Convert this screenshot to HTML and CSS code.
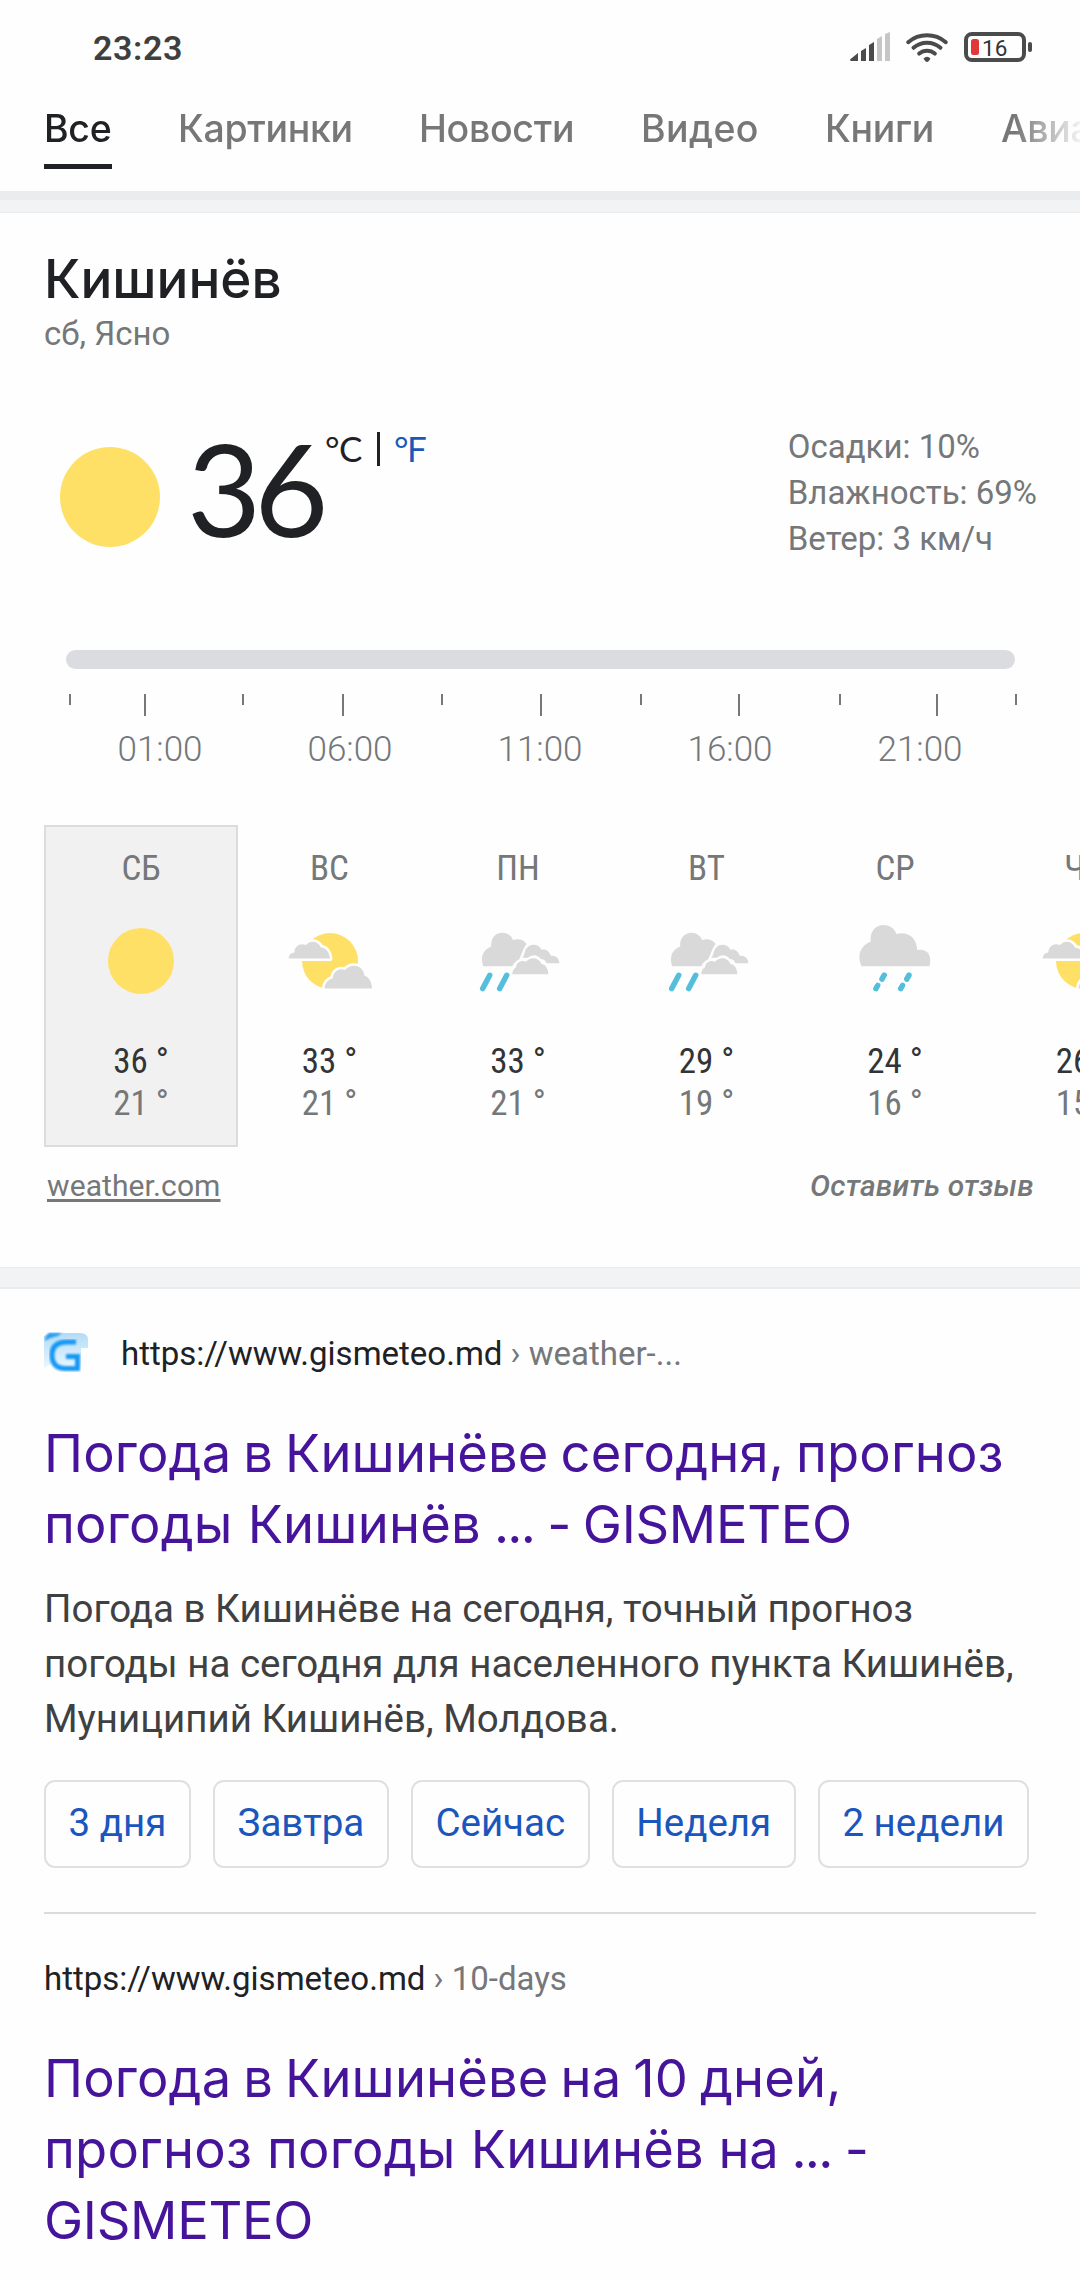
FILE: index.html
```
<!DOCTYPE html>
<html lang="ru">
<head>
<meta charset="utf-8">
<title>Погода в Кишинёве</title>
<link rel="stylesheet" href="styles.css">
</head>
<body>
<svg class="defs" width="0" height="0">
  <symbol id="i-sun" viewBox="0 0 96 96"><circle cx="48" cy="48" r="33" fill="#ffe067"/></symbol>
  <symbol id="i-partly" viewBox="0 0 96 96">
    <circle cx="48" cy="48" r="28" fill="#ffe067"/>
    <g fill="#d9d9d9" stroke="#fff" stroke-width="5" stroke-linejoin="round" paint-order="stroke">
      <path d="M6.5 45.5C7 41.5 9 39.6 12.3 39.5C12.5 32.5 18.500 29.500 24 32C28 27 36 27.500 39 34.500C44 34.500 47.500 39.500 48 45.500Z"/>
      <path d="M42.500 75.500C43 70 46 66.500 50.500 65.500C51.500 58 57 54.500 63 57C69 50.500 80.500 51 82.500 62.500C87.500 64.500 90 69.500 90 75.500Z"/>
    </g>
  </symbol>
  <symbol id="i-showers" viewBox="0 0 96 96">
    <g fill="#d9d9d9">
      <path d="M13.300 53.300C9.800 43.500 13.500 36.500 21.200 33.500C20.500 25 25.500 19.700 32.500 19.700C38 19.700 41.500 23 43 27C48.500 25.300 53.800 26.500 56.600 31C52.500 36 51.500 42.500 49 46.500C45.500 48 43.500 50.500 42.200 53.300Z"/>
      <path d="M52.100 44.800C54.300 43 54.200 40 55.500 37C58.500 30.500 68 29.500 71.500 36.800C75 36 79 37.500 80.500 42.500C86 42.500 89.300 45.500 89.300 50.300H76.600C75.500 47.500 73.500 46 70.500 45.700C68 41.500 61.500 41 58 44.800Z"/>
      <path d="M42.200 61.300C42.500 57.500 44 55.300 46 54.500C46.500 49 51.500 46.800 56 48.800C60 43.600 68.500 43.800 71.500 51C75.500 51.500 78.300 56 78.300 61.300Z"/>
    </g>
    <path d="M19.700 62.300L12.700 75.500M36.700 62.300L29.700 75.500" stroke="#53bfda" stroke-width="5.500" stroke-linecap="round"/>
  </symbol>
  <symbol id="i-rain" viewBox="0 0 96 96">
    <path fill="#d9d9d9" d="M14.500 53.300C9.500 42 13.500 32.500 23.800 28.500C22.500 18.500 28.500 12 36.700 12C43 12 47.500 15.500 49.400 21C60.500 18 70 24.500 70.200 37.200C78 35.500 83.200 40 83.200 47C83.200 49.500 83 51.500 82.300 53.300Z"/>
    <path d="M37.200 62.200L35 66M30.700 72.500L28.900 75.700M62 62.200L59.800 66M55.500 72.500L53.700 75.700" stroke="#53bfda" stroke-width="5.500" stroke-linecap="round"/>
  </symbol>
</svg>

<header class="top">
  <div class="status">
    <span class="time">23:23</span>
    <svg class="status-icons" viewBox="0 0 184 30" width="184" height="30">
      <g fill="#4b4b4b">
        <path d="M0 27.500L8 21V29H1.500Q0 29 0 27.500ZM11 19L16 16V29H11ZM19 13L24 10V29H19Z"/>
        <path fill="#c6c6c6" d="M27 7L32 4V29H27ZM35 2L40 0V29H35Z"/>
        <path d="M73.500 26.500Q77 23 80.500 26.500Q78.500 30 77 30Q75.500 30 73.500 26.500Z"/>
        <rect x="178" y="10" width="4" height="10" rx="2"/>
      </g>
      <g fill="none" stroke="#4b4b4b" stroke-width="4" stroke-linecap="round">
        <path d="M58.200 10.200A29 29 0 0 1 95.800 10.200M63.500 15.800A20.500 20.500 0 0 1 90.500 15.800M69.200 21.600A12 12 0 0 1 84.800 21.600"/>
        <rect x="116" y="2" width="58" height="26" rx="6"/>
      </g>
      <rect x="121" y="7" width="8" height="16" rx="2.500" fill="#e23638"/>
      <text class="charge" x="132" y="23.500">16</text>
    </svg>
  </div>
  <nav class="tabs">
    <span class="tab active">Все</span><span class="tab">Картинки</span><span class="tab">Новости</span><span class="tab loose">Видео</span><span class="tab">Книги</span><span class="tab">Авиабилеты</span>
  </nav>
</header>
<div class="band first"></div>

<section class="weather">
  <h1 class="city">Кишинёв</h1>
  <div class="sub">сб, Ясно</div>
  <div class="now">
    <div class="sun"></div>
    <div class="temp">36</div>
    <div class="units"><span>°C</span><i class="sep"></i><span class="f">°F</span></div>
    <div class="info">Осадки: 10%<br>Влажность: 69%<br>Ветер: 3 км/ч</div>
  </div>
  <div class="track"></div>
  <svg class="ticks" width="950" height="22" viewBox="0 0 950 22">
    <path d="M4 0V11M177 0V11M376 0V11M575 0V11M774 0V11M950 0V11M79 0V22M277 0V22M475 0V22M673 0V22M871 0V22" stroke="#757779" stroke-width="2"/>
  </svg>
  <div class="hours"><span>01:00</span><span>06:00</span><span>11:00</span><span>16:00</span><span>21:00</span></div>
  <div class="days">
    <div class="day selected"><b>СБ</b><svg><use href="#i-sun"/></svg><span class="hi">36 °</span><span>21 °</span></div>
    <div class="day"><b>ВС</b><svg><use href="#i-partly"/></svg><span class="hi">33 °</span><span>21 °</span></div>
    <div class="day"><b>ПН</b><svg><use href="#i-showers"/></svg><span class="hi">33 °</span><span>21 °</span></div>
    <div class="day"><b>ВТ</b><svg><use href="#i-showers"/></svg><span class="hi">29 °</span><span>19 °</span></div>
    <div class="day"><b>СР</b><svg><use href="#i-rain"/></svg><span class="hi">24 °</span><span>16 °</span></div>
    <div class="day"><b>ЧТ</b><svg><use href="#i-partly"/></svg><span class="hi">26 °</span><span>15 °</span></div>
  </div>
  <div class="foot"><a class="source">weather.com</a><span class="feedback">Оставить отзыв</span></div>
</section>
<div class="band"></div>

<main class="results">
  <article>
    <div class="site">
      <svg class="favicon" viewBox="0 0 44 44">
        <defs>
          <linearGradient id="sky" x2="0" y2="1"><stop offset="0" stop-color="#b3dcf8"/><stop offset=".75" stop-color="#dff2fd"/><stop offset="1" stop-color="#fff"/></linearGradient>
          <filter id="soft"><feGaussianBlur stdDeviation=".8"/></filter>
        </defs>
        <path fill="url(#sky)" d="M0 4L6 1H36Q44 1 44 8V16H37V34Q30 40 20 40Q9 38 7 32L0 37Z"/>
        <path fill="#2d9cee" filter="url(#soft)" d="M5 1H18Q15 4 10 5Q5 6 1 9Q1 4 5 1Z"/>
        <path filter="url(#soft)" fill="none" stroke="#1798f5" stroke-width="5" d="M32 10H23C12.500 10 8 15 8 23C8 31.500 12.500 36.500 21.500 36.500H33.500V24.500H22"/>
      </svg>
      <div class="url">https://www.gismeteo.md<span> › weather-...</span></div>
    </div>
    <h2 class="title"><span class="tight">Погода в Кишинёве сегодня, прогноз</span><br><span class="loose">погоды Кишинёв</span><span class="dots"> ... - </span>GISMETEO</h2>
    <p class="desc">Погода в Кишинёве на сегодня, точный прогноз<br>погоды на сегодня для населенного пункта Кишинёв,<br>Муниципий Кишинёв, Молдова.</p>
    <div class="chips"><a>3 дня</a><a>Завтра</a><a>Сейчас</a><a>Неделя</a><a>2 недели</a></div>
  </article>
  <article class="second">
    <div class="url">https://www.gismeteo.md<span> › 10-days</span></div>
    <h2 class="title"><span class="tight">Погода в Кишинёве на 10 дней,</span><br><span class="loose">прогноз погоды Кишинёв</span> на<span class="dots"> ... -</span><br>GISMETEO</h2>
  </article>
</main>
</body>
</html>
```
FILE: styles.css
```
* { box-sizing: border-box; }
body { margin: 0; width: 1080px; height: 2280px; overflow: hidden; background: #fefefe; color: #757779; font-family: Roboto, "Noto Sans", sans-serif; }
.defs { display: block; }

.top { height: 191px; overflow: hidden; }
.status { display: flex; justify-content: space-between; padding: 28px 46px 0 93px; height: 103px; }
.time { font-size: 34px; line-height: 40px; font-weight: 600; color: #3f3f3f; letter-spacing: .6px; }
.status-icons { margin-top: 4px; }
.charge { font-size: 22.500px; fill: #333; }
.tabs { display: grid; grid-template-columns: 68px 175px 156px 118px 110px auto; column-gap: 66px; width: 1300px; padding-left: 44px; -webkit-mask-image: linear-gradient(90deg, #000 1015px, transparent 1086px); mask-image: linear-gradient(90deg, #000 1015px, transparent 1086px); }
.tab { font: 500 37.500px/48px Inter, sans-serif; letter-spacing: -.3px; height: 66px; padding-top: 1.500px; color: #777; }
.tab.loose { letter-spacing: .4px; }
.active { color: #202124; border-bottom: 5px solid #202124; }

.band { height: 22px; background: #f1f3f4; border-top: 1px solid #ebeced; border-bottom: 2px solid #e9ebec; }
.first { border-top: 9px solid #ebecee; border-bottom-width: 1px; }

.weather { height: 1054px; padding: 34px 44px 0; overflow: hidden; }
.city { margin: 0; font: 500 53px/64px Inter, sans-serif; color: #202124; }
.sub { font-size: 33px; line-height: 46px; }
.now { display: flex; margin-top: 67px; height: 138px; }
.sun { width: 100px; height: 100px; margin: 23px 27px 0 16px; border-radius: 50%; background: #ffe067; }
.temp { width: 138px; font: 400 128px/128px Lato, sans-serif; letter-spacing: -7px; color: #202124; }
.units { display: flex; font: 400 35px/43px Lato, sans-serif; letter-spacing: -.5px; color: #202124; padding-top: 3px; }
.sep { width: 3px; height: 34px; margin: 5px 14px 0 15px; background: #202124; }
.f { color: #1a57b8; letter-spacing: -1.500px; }
.info { margin-left: auto; font-size: 33px; line-height: 46px; margin-right: -1px; }
.track { margin: 88px 21px 0 22px; height: 19px; border-radius: 10px; background: #dadce0; }
.ticks { display: block; margin: 25px 0 11px 22px; overflow: visible; }
.hours { display: flex; margin: 0 21px; }
.hours span { width: 190px; text-align: center; font-size: 35px; line-height: 46px; font-weight: 300; }
.days { display: flex; width: 1200px; margin-top: 52px; }
.day { flex: none; display: flex; flex-direction: column; align-items: center; width: 194px; height: 322px; margin-right: -5.500px; padding-top: 21px; border: 2px solid transparent; font: 400 35px/42px "Roboto Condensed", Roboto, sans-serif; }
.day b { font-weight: 400; }
.day svg { width: 96px; height: 96px; margin: 23px 0 32px; }
.day .hi { color: #333436; }
.selected { background: #f1f1f1; border-color: #dadcdd; }
.foot { display: flex; justify-content: space-between; margin-top: 19px; padding: 0 2px 0 3px; font-size: 30px; line-height: 40px; }
.source { letter-spacing: .1px; text-decoration: underline; text-decoration-thickness: 3px; text-underline-offset: 3px; text-decoration-skip-ink: none; }
.feedback { font-style: italic; font-weight: 500; letter-spacing: .15px; }

.results { padding: 43px 44px 0; }
.site { display: flex; align-items: center; gap: 33px; height: 44px; }
.favicon { width: 44px; height: 44px; }
.url { font-size: 33px; line-height: 40px; color: #202124; }
.url span { color: #757779; }
.title { margin: 42px 0 0; font: 400 52.500px/71px Inter, sans-serif; letter-spacing: -.3px; color: #46139b; white-space: nowrap; }
.tight { letter-spacing: .15px; word-spacing: -3px; }
.title .loose { letter-spacing: .2px; }
.dots { letter-spacing: -1.700px; }
.desc { margin: 21px 0 34px; font-size: 38.500px; line-height: 55px; color: #3f4042; white-space: nowrap; }
.chips { display: flex; gap: 22px; }
.chips a { height: 88px; padding: 0 22.600px; border: 2px solid #dfe0e2; border-radius: 11px; font-size: 38.500px; line-height: 82px; color: #1a56bd; white-space: nowrap; }
.second { margin-top: 44px; padding-top: 45px; border-top: 2px solid #dadbdd; }
.second .title { margin-top: 44px; }
```
